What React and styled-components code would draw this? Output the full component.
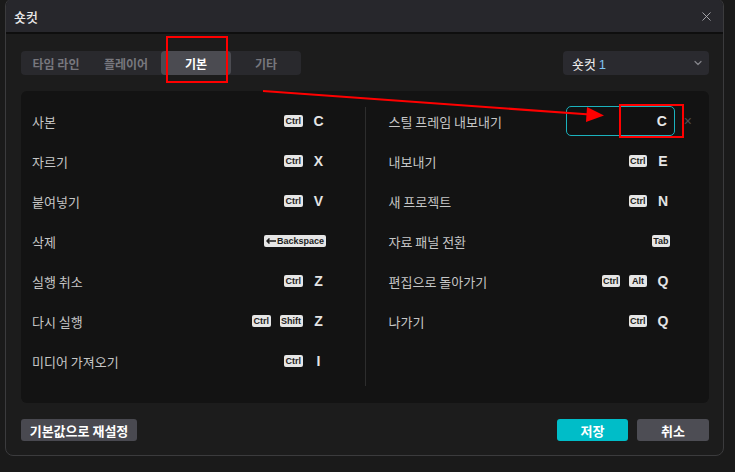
import React from 'react';
import styled, { createGlobalStyle } from 'styled-components';
import { X, ChevronDown } from 'lucide-react';

const GlobalStyle = createGlobalStyle`
    body {
        margin: 0;
        background: #1a1a1a;
        font-family: "Noto Sans CJK KR", "Noto Sans", sans-serif;
        overflow: hidden;
    }
`;

const leftRows = [
    { label: '사본', keys: ['Ctrl'], letter: 'C' },
    { label: '자르기', keys: ['Ctrl'], letter: 'X' },
    { label: '붙여넣기', keys: ['Ctrl'], letter: 'V' },
    { label: '삭제', keys: ['Backspace'] },
    { label: '실행 취소', keys: ['Ctrl'], letter: 'Z' },
    { label: '다시 실행', keys: ['Ctrl', 'Shift'], letter: 'Z' },
    { label: '미디어 가져오기', keys: ['Ctrl'], letter: 'I' },
];

const rightRows = [
    { label: '스틸 프레임 내보내기', editing: 'C' },
    { label: '내보내기', keys: ['Ctrl'], letter: 'E' },
    { label: '새 프로젝트', keys: ['Ctrl'], letter: 'N' },
    { label: '자료 패널 전환', keys: ['Tab'] },
    { label: '편집으로 돌아가기', keys: ['Ctrl', 'Alt'], letter: 'Q' },
    { label: '나가기', keys: ['Ctrl'], letter: 'Q' },
];

const tabs = ['타임 라인', '플레이어', '기본', '기타'];

// backspace badge gets a drawn arrow in front
const KeyBadge = ({ name }) => (
    <Badge>
        {name === 'Backspace' && (
            <svg width="10" height="6" viewBox="0 0 10 6" style={{ marginRight: 1 }}>
                <path d="M10 3H2M3.5 0.5L1 3l2.5 2.5" stroke="#1d1d1d" strokeWidth="1.5" fill="none" />
            </svg>
        )}
        {name}
    </Badge>
);

const ShortcutRow = ({ row }) => (
    <Row>
        <Label>{row.label}</Label>
        {row.editing ? (
            <Editor>
                <KeyInput>{row.editing}</KeyInput>
                <Clear>×</Clear>
            </Editor>
        ) : (
            <Keys>
                {row.keys.map(k => <KeyBadge key={k} name={k} />)}
                {row.letter && <Letter>{row.letter}</Letter>}
            </Keys>
        )}
    </Row>
);

const App = () => {
    return (
        <>
            <GlobalStyle />
            <Page>
                <Dialog>
                    <Header>
                        <Title>숏컷</Title>
                        <CloseButton><X size={15} strokeWidth={1.4} /></CloseButton>
                    </Header>
                    <Body>
                        <Toolbar>
                            <Tabs>
                                {tabs.map(t => <Tab key={t} active={t === '기본'}>{t}</Tab>)}
                            </Tabs>
                            <Select>
                                <span>숏컷 <Num>1</Num></span>
                                <ChevronDown size={12} strokeWidth={2.4} color="#85858b" />
                            </Select>
                        </Toolbar>
                        <Panel>
                            <Column side="left">
                                {leftRows.map(r => <ShortcutRow key={r.label} row={r} />)}
                            </Column>
                            <Divider />
                            <Column side="right">
                                {rightRows.map(r => <ShortcutRow key={r.label} row={r} />)}
                            </Column>
                        </Panel>
                        <Footer>
                            <Button kind="reset">기본값으로 재설정</Button>
                            <Actions>
                                <Button kind="save">저장</Button>
                                <Button kind="cancel">취소</Button>
                            </Actions>
                        </Footer>
                    </Body>
                </Dialog>
                {/* annotation overlay */}
                <Overlay width="735" height="472" viewBox="0 0 735 472">
                    <rect x="167" y="39" width="60" height="45" fill="none" stroke="#ff0000" strokeWidth="2" />
                    <rect x="620" y="107" width="63" height="32" fill="none" stroke="#ff0000" strokeWidth="2" />
                    <line x1="263" y1="93" x2="590" y2="116.5" stroke="#ff0000" strokeWidth="2.2" />
                    <polygon points="587,109 604,117.5 586,124" fill="#ff0000" />
                </Overlay>
            </Page>
        </>
    );
};

const Page = styled.div`
    position: relative;
    width: 735px;
    height: 472px;
    padding-left: 5px;
    box-sizing: border-box;
`;

const Dialog = styled.div`
    width: 719px;
    height: 458px;
    margin-top: -2px;
    box-sizing: border-box;
    border: 1px solid #3b3b3d;
    border-radius: 8px;
    background: #1c1c1c;
    overflow: hidden;
    display: flex;
    flex-direction: column;
`;

const Header = styled.div`
    height: 35px;
    flex-shrink: 0;
    display: flex;
    align-items: center;
    justify-content: space-between;
    padding: 2px 9px 0 8px;
    box-sizing: border-box;
    background: #27272c;
    border-bottom: 2px solid #0e0e0e;
`;

const Title = styled.div`
    color: #e8e8e8;
    font-size: 13px;
    font-weight: 500;
`;

const CloseButton = styled.div`
    display: flex;
    color: #b4b4b8;
`;

const Body = styled.div`
    flex: 1;
    display: flex;
    flex-direction: column;
    padding: 17px 14px 0 15px;
`;

const Toolbar = styled.div`
    display: flex;
    justify-content: space-between;
    align-items: center;
    height: 24px;
`;

const Tabs = styled.div`
    display: flex;
    background: #29292d;
    border-radius: 4px;
    height: 24px;
`;

const Tab = styled.div`
    width: 70px;
    height: 24px;
    display: flex;
    align-items: center;
    justify-content: center;
    font-size: 12px;
    font-weight: 700;
    border-radius: 4px;
    color: ${p => p.active ? '#ffffff' : '#77777d'};
    background: ${p => p.active ? '#4b4b51' : 'transparent'};
`;

const Select = styled.div`
    width: 146px;
    height: 24px;
    box-sizing: border-box;
    background: #2a2a2f;
    border-radius: 4px;
    display: flex;
    align-items: center;
    justify-content: space-between;
    padding: 0 5px 0 9px;
    color: #f0f0f0;
    font-size: 13px;
`;

const Num = styled.span`
    color: #7fc4f2;
    font-family: "Liberation Sans", sans-serif;
`;

const Panel = styled.div`
    margin-top: 16px;
    height: 312px;
    box-sizing: border-box;
    background: #131313;
    border-radius: 6px;
    padding: 10px 0 17px;
    display: grid;
    grid-template-columns: 1fr 1px 1fr;
`;

const Column = styled.div`
    display: flex;
    flex-direction: column;
    padding: ${p => p.side === 'left' ? '0 39px 0 11px' : '0 39px 0 23px'};
`;

const Divider = styled.div`
    background: #2d2d2d;
    margin-top: 6px;
`;

const Row = styled.div`
    height: 40px;
    flex-shrink: 0;
    display: flex;
    align-items: center;
    justify-content: space-between;
`;

const Label = styled.div`
    color: #c6c6c6;
    font-size: 13px;
`;

const Keys = styled.div`
    display: flex;
    align-items: center;
    gap: 9px;
`;

const Badge = styled.span`
    height: 12px;
    padding: 0 1.5px;
    min-width: 15px;
    border-radius: 2px;
    background: #e6e6e6;
    color: #1d1d1d;
    font-family: "Liberation Sans", Arial, sans-serif;
    font-size: 9px;
    font-weight: 700;
    line-height: 12px;
    display: flex;
    align-items: center;
    justify-content: center;
`;

const Letter = styled.span`
    width: 14px;
    text-align: center;
    color: #e4e4e4;
    font-family: "Liberation Sans", Arial, sans-serif;
    font-size: 14px;
    font-weight: 700;
`;

const Editor = styled.div`
    display: flex;
    align-items: center;
    margin-right: -22px;
`;

const KeyInput = styled.div`
    width: 109px;
    height: 30px;
    box-sizing: border-box;
    border: 1px solid #1bb2bd;
    border-radius: 5px;
    background: #111111;
    display: flex;
    align-items: center;
    justify-content: flex-end;
    padding-right: 7px;
    color: #e6e6e6;
    font-family: "Liberation Sans", Arial, sans-serif;
    font-size: 14px;
    font-weight: 700;
`;

const Clear = styled.span`
    margin-left: 9px;
    color: #4f4f52;
    font-family: "Liberation Sans", Arial, sans-serif;
    font-size: 14px;
`;

const Footer = styled.div`
    margin-top: 16px;
    display: flex;
    justify-content: space-between;
    align-items: center;
`;

const Actions = styled.div`
    display: flex;
    gap: 9px;
`;

const buttonBg = {
    reset: '#494950',
    save: '#00bdc8',
    cancel: '#4d4d54',
};

const buttonWidth = {
    reset: '116px',
    save: '71px',
    cancel: '72px',
};

const Button = styled.div`
    height: 22px;
    width: ${p => buttonWidth[p.kind]};
    border-radius: 3px;
    background: ${p => buttonBg[p.kind]};
    color: #ffffff;
    font-size: 13px;
    font-weight: 700;
    display: flex;
    align-items: center;
    justify-content: center;
`;

const Overlay = styled.svg`
    position: absolute;
    top: 0;
    left: 0;
    pointer-events: none;
`;

export default App;
